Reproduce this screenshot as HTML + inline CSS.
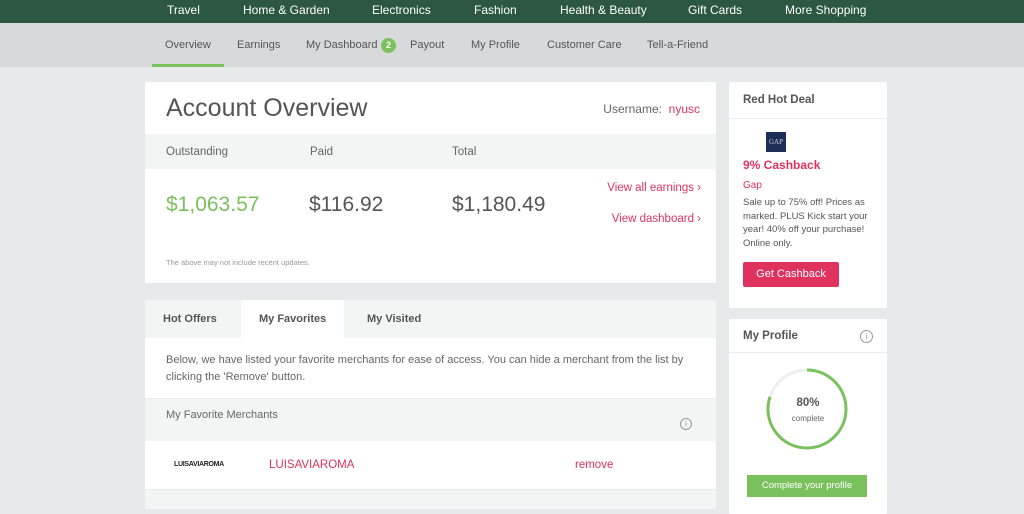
<!DOCTYPE html><html><head><style>
*{box-sizing:border-box;margin:0;padding:0}
body{width:1024px;height:509px;overflow:hidden;background:#e8e9eb;font-family:"Liberation Sans",sans-serif;position:relative}
.a{position:absolute}
.top{left:0;top:0;width:1024px;height:23px;background:#2c5741}
.top span{position:absolute;top:3px;color:#fff;font-size:12px}
.sub{left:0;top:23px;width:1024px;height:44px;background:#d8d9db}
.sub span{position:absolute;top:16px;color:#555;font-size:11px}
.card{background:#fff;border-radius:2px}
.pink{color:#e0325e}
</style></head><body>
<div class="a top">
<span style="left:167px">Travel</span><span style="left:243px">Home &amp; Garden</span><span style="left:372px">Electronics</span><span style="left:474px">Fashion</span><span style="left:560px">Health &amp; Beauty</span><span style="left:688px">Gift Cards</span><span style="left:785px">More Shopping</span>
</div>
<div class="a sub">
<span style="left:165px">Overview</span><span style="left:237px">Earnings</span><span style="left:306px">My Dashboard</span>
<div class="a" style="left:381px;top:15px;width:15px;height:15px;border-radius:50%;background:#7ac15d;color:#fff;font-size:9px;text-align:center;line-height:15px;font-weight:bold">2</div>
<span style="left:410px">Payout</span><span style="left:471px">My Profile</span><span style="left:547px">Customer Care</span><span style="left:647px">Tell-a-Friend</span>
<div class="a" style="left:152px;top:41px;width:72px;height:3px;background:#7ac15d"></div>
</div>

<div class="a card" style="left:145px;top:82px;width:571px;height:201px">
<div class="a" style="left:21px;top:12px;font-size:25px;color:#555">Account Overview</div>
<div class="a" style="right:16px;top:20px;font-size:12px;color:#666">Username:&nbsp; <span class="pink">nyusc</span></div>
<div class="a" style="left:0;top:52px;width:571px;height:35px;background:#f3f4f4;font-size:11.5px;color:#666">
<span class="a" style="left:21px;top:12px">Outstanding</span><span class="a" style="left:165px;top:12px">Paid</span><span class="a" style="left:307px;top:12px">Total</span></div>
<div class="a" style="left:21px;top:111px;font-size:21px;color:#7ac15d">$1,063.57</div>
<div class="a" style="left:164px;top:111px;font-size:21px;color:#555">$116.92</div>
<div class="a" style="left:307px;top:111px;font-size:21px;color:#555">$1,180.49</div>
<div class="a pink" style="right:15px;top:100px;font-size:11.5px">View all earnings ›</div>
<div class="a pink" style="right:15px;top:131px;font-size:11.5px">View dashboard ›</div>
<div class="a" style="left:21px;top:176px;font-size:7.5px;color:#999">The above may not include recent updates.</div>
</div>

<div class="a card" style="left:145px;top:300px;width:571px;height:209px;overflow:hidden">
<div class="a" style="left:0;top:0;width:571px;height:38px;background:#f3f4f4"></div>
<div class="a" style="left:96px;top:0;width:103px;height:38px;background:#fff"></div>
<div class="a" style="left:18px;top:13px;font-size:11px;font-weight:bold;color:#555">Hot Offers</div>
<div class="a" style="left:114px;top:13px;font-size:11px;font-weight:bold;color:#555">My Favorites</div>
<div class="a" style="left:222px;top:13px;font-size:11px;font-weight:bold;color:#555">My Visited</div>
<div class="a" style="left:21px;top:52px;width:530px;font-size:11px;line-height:17px;color:#666">Below, we have listed your favorite merchants for ease of access. You can hide a merchant from the list by clicking the 'Remove' button.</div>
<div class="a" style="left:0;top:98px;width:571px;height:43px;background:#f3f4f4;border-top:1px solid #eaeaea"></div>
<div class="a" style="left:21px;top:109px;font-size:11px;color:#666">My Favorite Merchants</div>
<div class="a" style="left:535px;top:118px;width:12px;height:12px;border:1px solid #999;border-radius:50%;font-size:8px;color:#999;text-align:center;line-height:10px">i</div>
<div class="a" style="left:29px;top:161px;font-size:7px;font-weight:bold;color:#222;letter-spacing:-.3px">LUISAVIAROMA</div>
<div class="a pink" style="left:124px;top:159px;font-size:11.5px">LUISAVIAROMA</div>
<div class="a pink" style="left:430px;top:159px;font-size:11.5px">remove</div>
<div class="a" style="left:0;top:189px;width:571px;height:20px;background:#f3f4f4;border-top:1px solid #eaeaea"></div>
</div>

<div class="a card" style="left:729px;top:82px;width:158px;height:226px">
<div class="a" style="left:14px;top:12px;font-size:11.5px;font-weight:bold;color:#555">Red Hot Deal</div>
<div class="a" style="left:0;top:36px;width:158px;height:1px;background:#eee"></div>
<div class="a" style="left:37px;top:50px;width:20px;height:20px;background:#1d2e55;color:#ccd;font-size:7px;text-align:center;line-height:20px;font-family:'Liberation Serif',serif">GAP</div>
<div class="a pink" style="left:14px;top:76px;font-size:12px;font-weight:bold">9% Cashback</div>
<div class="a pink" style="left:14px;top:98px;font-size:10px">Gap</div>
<div class="a" style="left:14px;top:114px;width:135px;font-size:9.5px;line-height:13.5px;color:#555">Sale up to 75% off! Prices as marked. PLUS Kick start your year! 40% off your purchase! Online only.</div>
<div class="a" style="left:14px;top:180px;width:96px;height:25px;background:#e0325e;color:#fff;font-size:11px;text-align:center;line-height:25px;border-radius:2px">Get Cashback</div>
</div>

<div class="a card" style="left:729px;top:319px;width:158px;height:195px">
<div class="a" style="left:14px;top:11px;font-size:11.5px;font-weight:bold;color:#555">My Profile</div>
<div class="a" style="left:131px;top:11px;width:13px;height:13px;border:1px solid #999;border-radius:50%;font-size:8px;color:#999;text-align:center;line-height:11px">i</div>
<div class="a" style="left:0;top:33px;width:158px;height:1px;background:#eee"></div>
<svg class="a" style="left:36px;top:48px" width="84" height="84"><circle cx="42" cy="42" r="39" fill="none" stroke="#eee" stroke-width="3"/><circle cx="42" cy="42" r="39" fill="none" stroke="#7ac15d" stroke-width="3" stroke-dasharray="196 245" transform="rotate(-90 42 42)"/></svg>
<div class="a" style="left:0;top:78px;width:158px;text-align:center;font-size:11.5px;font-weight:bold;color:#555">80%</div>
<div class="a" style="left:0;top:95px;width:158px;text-align:center;font-size:8px;color:#666">complete</div>
<div class="a" style="left:18px;top:156px;width:120px;height:22px;background:#7ac15d;color:#fff;font-size:9.5px;text-align:center;line-height:22px">Complete your profile</div>
</div>
</body></html>
